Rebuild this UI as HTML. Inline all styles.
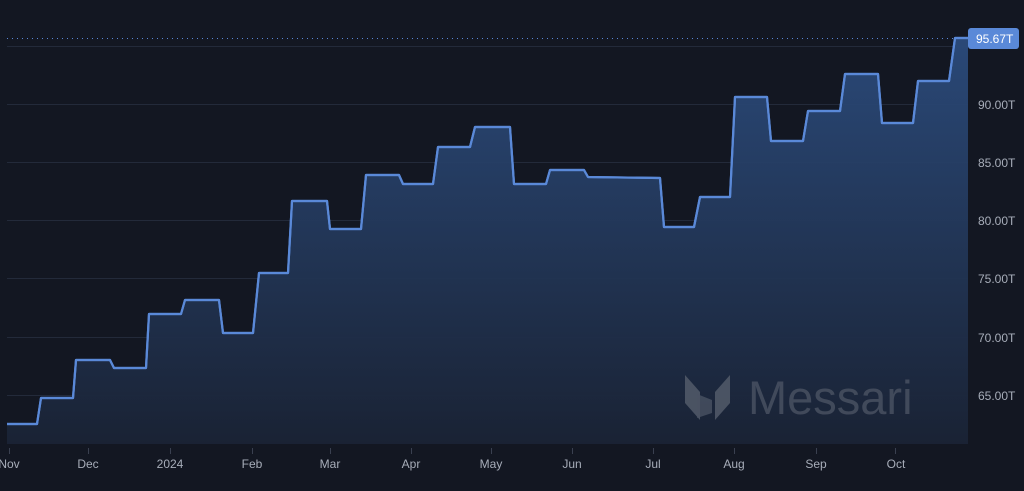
<!DOCTYPE html>
<html><head><meta charset="utf-8"><style>
html,body{margin:0;padding:0;background:#131722;width:1024px;height:491px;overflow:hidden}
svg text{font-family:"Liberation Sans",sans-serif}
</style></head><body>
<svg width="1024" height="491" viewBox="0 0 1024 491" xmlns="http://www.w3.org/2000/svg">
<defs>
<linearGradient id="g" x1="0" y1="0" x2="0" y2="1">
<stop offset="0" stop-color="#2b4b7c"/>
<stop offset="1" stop-color="#1a2335"/>
</linearGradient>
</defs>
<rect x="0" y="0" width="1024" height="491" fill="#131722"/>
<g stroke="#232a3a" stroke-width="1">
<line x1="7" y1="46.5" x2="968" y2="46.5"/>
<line x1="7" y1="104.5" x2="968" y2="104.5"/>
<line x1="7" y1="162.5" x2="968" y2="162.5"/>
<line x1="7" y1="220.5" x2="968" y2="220.5"/>
<line x1="7" y1="278.5" x2="968" y2="278.5"/>
<line x1="7" y1="337.5" x2="968" y2="337.5"/>
<line x1="7" y1="395.5" x2="968" y2="395.5"/>
</g>
<path id="ln" d="M7 424 L37 424 L41 398 L73 398 L76 360 L110 360 L114 368 L146 368 L149 314 L181 314 L185 300 L219 300 L223 333 L253 333 L259 273 L288 273 L292 201 L327 201 L330 229 L361 229 L366 175 L399 175 L403 184 L433 184 L438 147 L470 147 L475 127 L510 127 L514 184 L546 184 L550 170 L584 170 L588 177 L660 178 L664 227 L694 227 L700 197 L730 197 L735 97 L767 97 L771 141 L803 141 L808 111 L840 111 L845 74 L878 74 L882 123 L913 123 L918 81 L949 81 L955 38 L968 38" fill="none"/>
<path d="M7 424 L37 424 L41 398 L73 398 L76 360 L110 360 L114 368 L146 368 L149 314 L181 314 L185 300 L219 300 L223 333 L253 333 L259 273 L288 273 L292 201 L327 201 L330 229 L361 229 L366 175 L399 175 L403 184 L433 184 L438 147 L470 147 L475 127 L510 127 L514 184 L546 184 L550 170 L584 170 L588 177 L660 178 L664 227 L694 227 L700 197 L730 197 L735 97 L767 97 L771 141 L803 141 L808 111 L840 111 L845 74 L878 74 L882 123 L913 123 L918 81 L949 81 L955 38 L968 38 L968 444 L7 444 Z" fill="url(#g)" opacity="0.95"/>
<line x1="7" y1="38.5" x2="968" y2="38.5" stroke="#5b86d4" stroke-width="1" stroke-dasharray="1 4"/>
<!-- watermark -->
<g fill="#5a6270" opacity="0.75">
<polygon points="685,375 700,392 700,420 685,403"/>
<polygon points="697,394 712,400 712,413 697,418" opacity="0.8"/>
<polygon points="715,392 730,375 730,403 715,420"/>
<text x="748" y="414" font-size="47" fill="#4e5666">Messari</text>
</g>
<use href="#ln" stroke="#5a89d8" stroke-width="2.2" stroke-linejoin="round"/>
<path d="M7 424 L37 424 L41 398 L73 398 L76 360 L110 360 L114 368 L146 368 L149 314 L181 314 L185 300 L219 300 L223 333 L253 333 L259 273 L288 273 L292 201 L327 201 L330 229 L361 229 L366 175 L399 175 L403 184 L433 184 L438 147 L470 147 L475 127 L510 127 L514 184 L546 184 L550 170 L584 170 L588 177 L660 178 L664 227 L694 227 L700 197 L730 197 L735 97 L767 97 L771 141 L803 141 L808 111 L840 111 L845 74 L878 74 L882 123 L913 123 L918 81 L949 81 L955 38 L968 38" fill="none" stroke="#5a89d8" stroke-width="2.2" stroke-linejoin="round"/>
<g fill="#a7adb9" font-size="12">
<text x="978" y="109">90.00T</text>
<text x="978" y="167">85.00T</text>
<text x="978" y="225">80.00T</text>
<text x="978" y="283">75.00T</text>
<text x="978" y="342">70.00T</text>
<text x="978" y="400">65.00T</text>
</g>
<rect x="968" y="28" width="51" height="21" rx="3" fill="#5a89d8"/>
<text x="976" y="43" font-size="12" fill="#ffffff">95.67T</text>
<g stroke="#3a4050">
<line x1="9.5" y1="448" x2="9.5" y2="454"/>
<line x1="88.5" y1="448" x2="88.5" y2="454"/>
<line x1="170.5" y1="448" x2="170.5" y2="454"/>
<line x1="252.5" y1="448" x2="252.5" y2="454"/>
<line x1="330.5" y1="448" x2="330.5" y2="454"/>
<line x1="411.5" y1="448" x2="411.5" y2="454"/>
<line x1="491.5" y1="448" x2="491.5" y2="454"/>
<line x1="572.5" y1="448" x2="572.5" y2="454"/>
<line x1="653.5" y1="448" x2="653.5" y2="454"/>
<line x1="734.5" y1="448" x2="734.5" y2="454"/>
<line x1="816.5" y1="448" x2="816.5" y2="454"/>
<line x1="895.5" y1="448" x2="895.5" y2="454"/>
</g>
<g fill="#a7adb9" font-size="12" text-anchor="middle">
<text x="9" y="468">Nov</text>
<text x="88" y="468">Dec</text>
<text x="170" y="468">2024</text>
<text x="252" y="468">Feb</text>
<text x="330" y="468">Mar</text>
<text x="411" y="468">Apr</text>
<text x="491" y="468">May</text>
<text x="572" y="468">Jun</text>
<text x="653" y="468">Jul</text>
<text x="734" y="468">Aug</text>
<text x="816" y="468">Sep</text>
<text x="896" y="468">Oct</text>
</g>
</svg>
</body></html>
